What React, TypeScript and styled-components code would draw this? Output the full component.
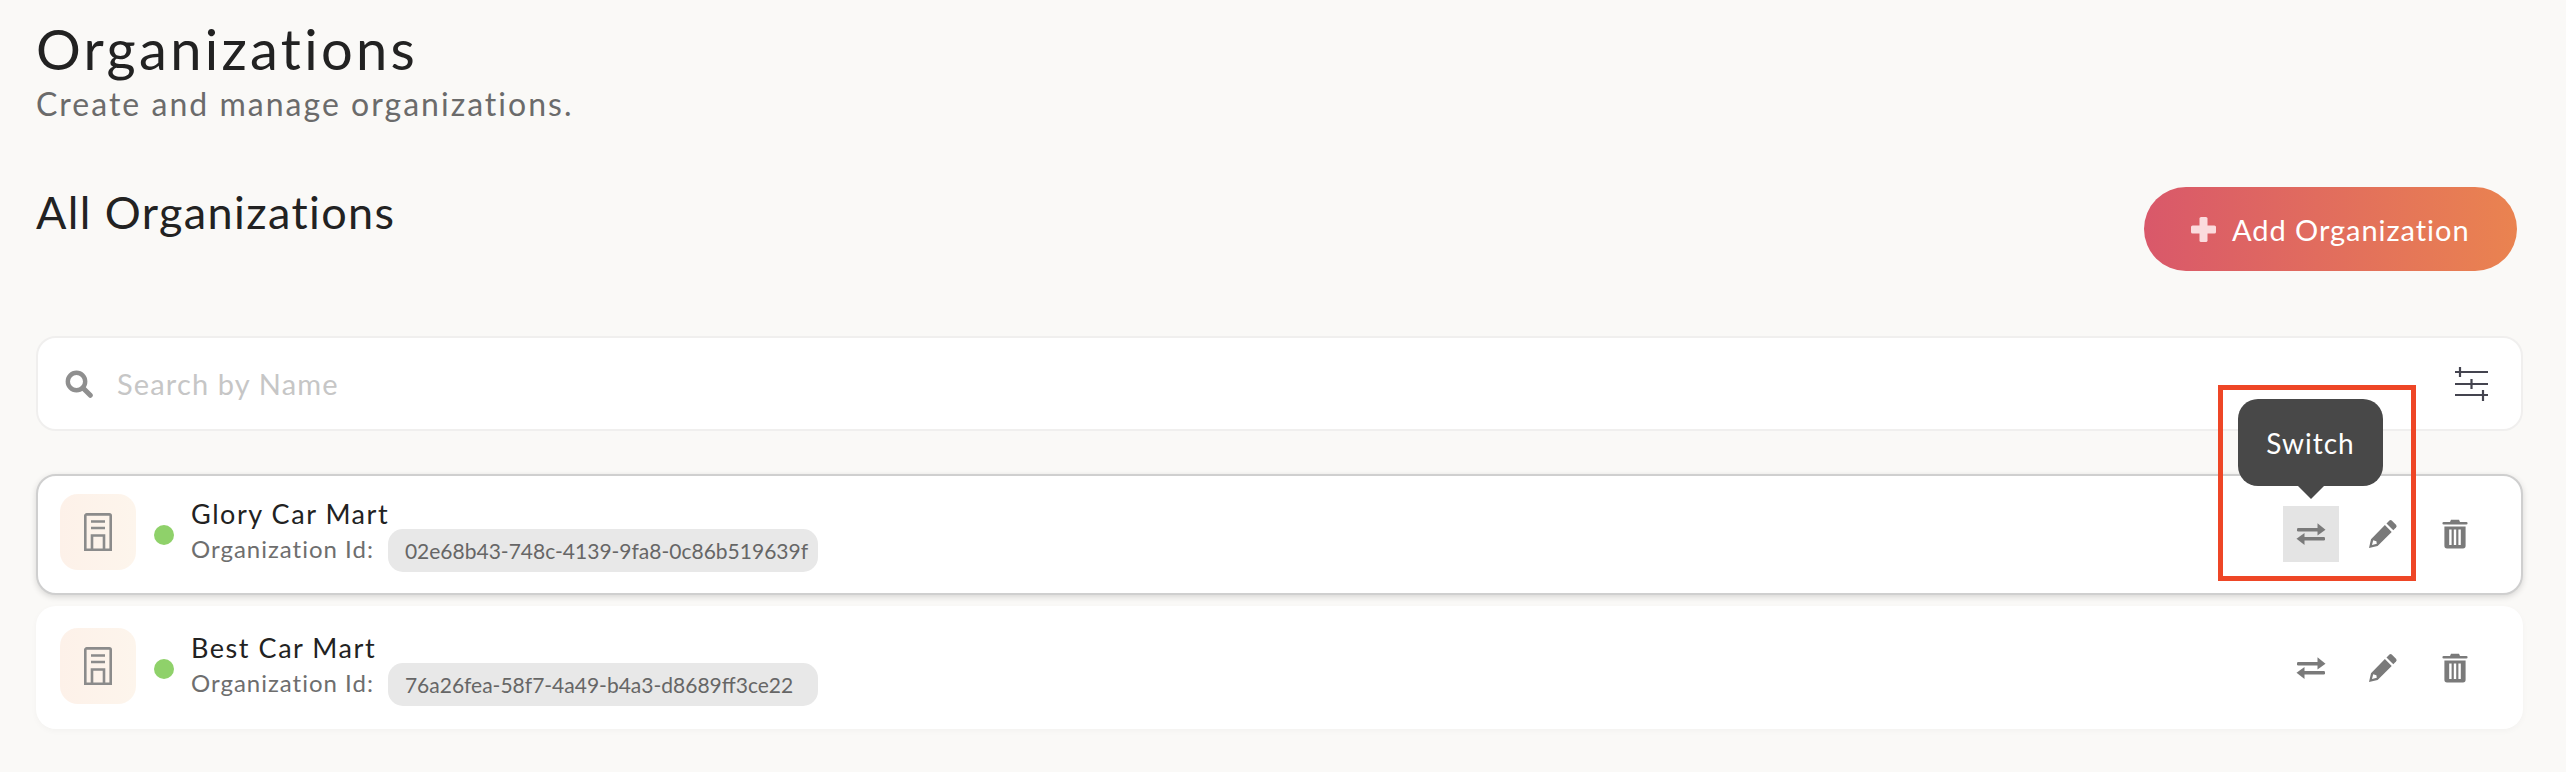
import React from "react";
import styled, { createGlobalStyle } from "styled-components";

const Global = createGlobalStyle`
  html, body { margin: 0; padding: 0; background: #faf9f7; }
  body { font-family: "Lato", "Liberation Sans", sans-serif; overflow: hidden; }
  * { box-sizing: border-box; }
`;

const Page = styled.div`
  width: 2566px;
  height: 772px;
  padding: 13px 43px 0 36px;
  background: #faf9f7;
  position: relative;
  overflow: hidden;
`;
const Title = styled.h1`
  margin: 0;
  font-size: 56px;
  line-height: 72px;
  font-weight: 400;
  color: #222;
  letter-spacing: 3.3px;
`;
const Subtitle = styled.p`
  margin: 0;
  font-size: 32px;
  line-height: 38px;
  color: #6b6b6b;
  letter-spacing: 2.02px;
`;
const SectionHead = styled.div`
  display: flex;
  justify-content: space-between;
  align-items: flex-start;
  height: 213px;
  padding: 61px 6px 0 0;
`;
const SectionTitle = styled.h2`
  margin: 0;
  font-size: 45px;
  line-height: 56px;
  font-weight: 400;
  color: #222;
  letter-spacing: 1.4px;
`;
const AddButton = styled.button`
  display: flex;
  align-items: center;
  gap: 16px;
  width: 373px;
  height: 84px;
  margin-top: 3px;
  padding: 0 0 0 47px;
  border: 0;
  border-radius: 42px;
  background: linear-gradient(90deg, #d9586a 0%, #ea8350 100%);
  color: #fff;
  font: 400 29px "Lato", sans-serif;
  letter-spacing: 0.95px;
`;
const SearchBar = styled.div`
  display: flex;
  align-items: center;
  height: 95px;
  padding: 0 31px 0 27px;
  background: #fff;
  border: 2px solid #f0efee;
  border-radius: 20px;
`;
const Placeholder = styled.span`
  flex: 1;
  margin-left: 24px;
  font-size: 29px;
  color: #c6c6c6;
  letter-spacing: 1.15px;
`;
const List = styled.div`
  display: flex;
  flex-direction: column;
  gap: 11px;
  margin-top: 43px;
`;
const Card = styled.div<{ $active?: boolean }>`
  display: flex;
  align-items: flex-start;
  height: ${(p) => (p.$active ? 121 : 123)}px;
  padding: ${(p) => (p.$active ? "18px 22px" : "22px 24px")};
  background: #fff;
  border: ${(p) => (p.$active ? "2px solid #cfcfcf" : "0")};
  border-radius: 20px;
  box-shadow: ${(p) =>
    p.$active ? "0 2px 6px rgba(0,0,0,0.14)" : "0 2px 6px rgba(0,0,0,0.03)"};
`;
const IconTile = styled.div`
  flex: none;
  width: 76px;
  height: 76px;
  display: flex;
  align-items: center;
  justify-content: center;
  border-radius: 18px;
  background: linear-gradient(90deg, #fdf1e9, #fdf5ec);
`;
const StatusDot = styled.span`
  flex: none;
  width: 20px;
  height: 20px;
  margin: 31px 15px 0 18px;
  border-radius: 50%;
  background: #8fd16a;
`;
const Info = styled.div`
  display: flex;
  flex-direction: column;
  padding-left: 2px;
`;
const Name = styled.div`
  font-size: 27px;
  line-height: 32px;
  margin-top: 4px;
  color: #222;
  letter-spacing: 1.55px;
`;
const IdRow = styled.div`
  display: flex;
  align-items: center;
  margin-top: -1px;
`;
const IdLabel = styled.span`
  font-size: 24px;
  margin-bottom: 5px;
  color: #6e6e6e;
  letter-spacing: 1px;
`;
const IdPill = styled.span`
  display: flex;
  align-items: center;
  height: 43px;
  width: 430px;
  margin-left: 14px;
  padding-left: 17px;
  border-radius: 15px;
  background: #e8e8e8;
  color: #666;
  font-size: 21px;
  letter-spacing: 0;
  white-space: nowrap;
`;
const Actions = styled.div`
  display: flex;
  align-items: center;
  gap: 16px;
  margin-left: auto;
  margin-right: 16px;
  margin-top: 12px;
`;
const ActionBox = styled.div<{ $hover?: boolean }>`
  width: 56px;
  height: 56px;
  display: flex;
  align-items: center;
  justify-content: center;
  background: ${(p) => (p.$hover ? "#e4e4e4" : "transparent")};
  position: relative;
`;
const Tooltip = styled.div`
  position: absolute;
  left: -45px;
  bottom: 76px;
  width: 145px;
  height: 87px;
  display: flex;
  align-items: center;
  justify-content: center;
  border-radius: 20px;
  background: #484848;
  color: #fff;
  font-size: 28px;
  letter-spacing: 1px;
  &::after {
    content: "";
    position: absolute;
    left: 60px;
    bottom: -13px;
    border-left: 13px solid transparent;
    border-right: 13px solid transparent;
    border-top: 13px solid #484848;
  }
`;
const Annotation = styled.div`
  position: absolute;
  left: 2218px;
  top: 385px;
  width: 198px;
  height: 196px;
  border: 5px solid #ee4626;
  pointer-events: none;
`;

const Building = () => (
  <svg width="30" height="38" viewBox="0 0 30 38" fill="none" stroke="#8b8b8b" strokeWidth="2.6">
    <path d="M2.3 36.7V2.8a1.4 1.4 0 0 1 1.4-1.4h22.6a1.4 1.4 0 0 1 1.4 1.4v33.9z" />
    <path d="M8 8.5h14M8 15h14M9 36.5V22.5h12v14" />
  </svg>
);
const SwitchIcon = () => (
  <svg width="30" height="24" viewBox="0 0 30 24" fill="#7a7a7a">
    <rect x="1" y="6" width="25" height="3.4" rx="1.2" />
    <path d="M21.5 1.2 29.5 7.7 21.5 13.5z" />
    <rect x="4" y="15" width="25" height="3.4" rx="1.2" />
    <path d="M8.5 11 .5 16.7 8.5 23z" />
  </svg>
);
const PencilIcon = () => (
  <svg width="30" height="30" viewBox="0 0 30 30" fill="#7a7a7a">
    <path d="M21.2 1.8a2 2 0 0 1 2.8 0l4 4a2 2 0 0 1 0 2.8l-2.7 2.7-6.8-6.8z" />
    <path d="M16.9 6.1 23.7 12.9 9.6 27 1 29l2-8.7zM5.2 21.2 4 26l4.8-1.2-.4-2.6z" fillRule="evenodd" />
  </svg>
);
const TrashIcon = () => (
  <svg width="26" height="30" viewBox="0 0 26 30" fill="#7a7a7a">
    <path d="M9 .8h8l1 2.2h6.3a1.3 1.3 0 0 1 0 2.6H1.7a1.3 1.3 0 0 1 0-2.6H8z" />
    <path
      fillRule="evenodd"
      d="M2.4 7.5h21.2v19.3a2.6 2.6 0 0 1-2.6 2.6H5a2.6 2.6 0 0 1-2.6-2.6zM7.2 10.5v15.6h2.4V10.5zM11.8 10.5v15.6h2.4V10.5zM16.4 10.5v15.6h2.4V10.5z"
    />
  </svg>
);
const SearchIcon = () => (
  <svg width="28" height="28" viewBox="0 0 28 28" fill="none" stroke="#8f8f8f">
    <circle cx="11.5" cy="11.5" r="8.7" strokeWidth="4.4" />
    <path d="M18 18 25.3 25.3" strokeWidth="5" strokeLinecap="round" />
  </svg>
);
const FilterIcon = () => (
  <svg width="36" height="36" viewBox="0 0 36 36" fill="none" stroke="#44444f" strokeWidth="2.2">
    <path d="M1 6h33M1 18h33M1 29h33M6 1v10M17.5 13v10M29 24v11" />
  </svg>
);
const PlusIcon = () => (
  <svg width="25" height="25" viewBox="0 0 25 25" fill="#fbdbdd">
    <rect x="8.5" y="0" width="8" height="25" rx="1.6" />
    <rect x="0" y="8.5" width="25" height="8" rx="1.6" />
  </svg>
);

const orgs = [
  { name: "Glory Car Mart", id: "02e68b43-748c-4139-9fa8-0c86b519639f", active: true },
  { name: "Best Car Mart", id: "76a26fea-58f7-4a49-b4a3-d8689ff3ce22", active: false },
];

export default function App() {
  return (
    <Page>
      <Global />
      <Title>Organizations</Title>
      <Subtitle>Create and manage organizations.</Subtitle>
      <SectionHead>
        <SectionTitle>All Organizations</SectionTitle>
        <AddButton>
          <PlusIcon />
          Add Organization
        </AddButton>
      </SectionHead>
      <SearchBar>
        <SearchIcon />
        <Placeholder>Search by Name</Placeholder>
        <FilterIcon />
      </SearchBar>
      <List>
        {orgs.map((o) => (
          <Card key={o.id} $active={o.active}>
            <IconTile>
              <Building />
            </IconTile>
            <StatusDot />
            <Info>
              <Name>{o.name}</Name>
              <IdRow>
                <IdLabel>Organization Id:</IdLabel>
                <IdPill>{o.id}</IdPill>
              </IdRow>
            </Info>
            <Actions>
              <ActionBox $hover={o.active}>
                <SwitchIcon />
                {o.active && <Tooltip>Switch</Tooltip>}
              </ActionBox>
              <ActionBox>
                <PencilIcon />
              </ActionBox>
              <ActionBox>
                <TrashIcon />
              </ActionBox>
            </Actions>
          </Card>
        ))}
      </List>
      <Annotation />
    </Page>
  );
}
